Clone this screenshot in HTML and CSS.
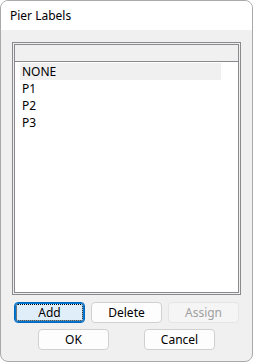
FILE: index.html
```html
<!DOCTYPE html>
<html>
<head>
  <title>Pier Labels</title>
  <link rel="stylesheet" href="styles.css">
</head>
<body>
  <div class="window">
    <div class="titlebar">Pier Labels</div>

    <div class="content">
      <div class="listbox">
        <div class="listbox-inner">
          <div class="list-header"></div>
          <ul class="list">
            <li class="selected">NONE</li>
            <li>P1</li>
            <li>P2</li>
            <li>P3</li>
          </ul>
        </div>
      </div>

      <div class="buttons top-row">
        <button type="button" class="btn focused">Add</button>
        <button type="button" class="btn">Delete</button>
        <button type="button" class="btn" disabled>Assign</button>
      </div>

      <div class="buttons bottom-row">
        <button type="button" class="btn">OK</button>
        <button type="button" class="btn">Cancel</button>
      </div>
    </div>
  </div>
</body>
</html>
```

FILE: styles.css
```css
* {
  box-sizing: border-box;
}

body {
  margin: 0;
  background-color: #ffffff;
  font-family: "Noto Sans", "Open Sans", sans-serif;
  font-size: 12px;
  color: #000000;
}

.window {
  width: 253px;
  height: 362px;
  border: 1px solid #a9a9a9;
  border-radius: 8px;
  background-color: #f0f0f0;
  overflow: hidden;
}

.titlebar {
  height: 29px;
  background-color: #ffffff;
  padding-left: 9px;
  line-height: 29px;
}

.content {
  padding: 12px 11px 0 11px;
}

.listbox {
  height: 253px;
  border: 1px solid #8a8a8e;
  padding: 1px;
}

.listbox-inner {
  height: 100%;
  border: 1px solid #8a8a8e;
  display: flex;
  flex-direction: column;
}

.list-header {
  height: 17px;
  background-color: #f0f0f0;
  border-bottom: 1px solid #8a8a8e;
}

.list {
  flex: 1;
  margin: 0;
  padding: 1px 0 0 5px;
  list-style: none;
  background-color: #ffffff;
}

.list li {
  width: 201px;
  height: 17px;
  line-height: 17px;
  padding-left: 2px;
}

.list li.selected {
  background-color: #f0f0f0;
}

.buttons {
  display: grid;
  grid-template-columns: repeat(3, 71px);
  column-gap: 6px;
}

.top-row {
  margin-top: 7px;
  padding-left: 2px;
}

.bottom-row {
  margin-top: 6px;
  grid-template-columns: 71px 71px;
  column-gap: 35px;
  justify-content: center;
}

.btn {
  height: 21px;
  padding: 0;
  font-family: inherit;
  font-size: 12px;
  color: #000000;
  background-color: #fdfdfd;
  border: 1px solid #d0d0d0;
  border-radius: 4px;
}

.btn.focused {
  background-color: #e0eef9;
  border: 1px solid #0067c0;
  box-shadow: inset 0 0 0 1px #0078d4;
  outline: 1px dotted #000000;
  outline-offset: -3px;
}

.btn:disabled {
  color: #a0a0a0;
  background-color: #f5f5f5;
  border-color: #e5e5e5;
}
```
